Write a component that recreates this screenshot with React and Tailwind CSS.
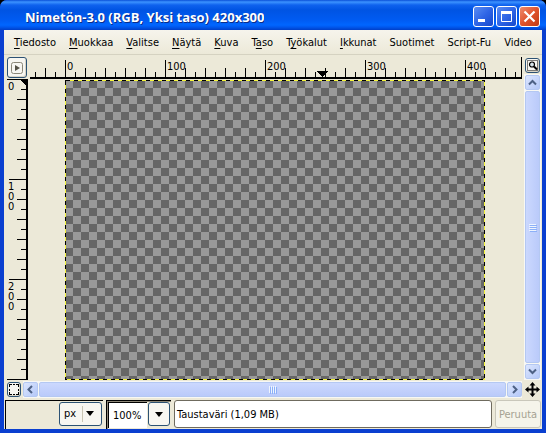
import React from "react";

const menus = [
  ["", "T", "iedosto"],
  ["", "M", "uokkaa"],
  ["", "V", "alitse"],
  ["", "N", "äytä"],
  ["", "K", "uva"],
  ["T", "a", "so"],
  ["T", "y", "ökalut"],
  ["", "I", "kkunat"],
  ["Suotimet", "", ""],
  ["Script-Fu", "", ""],
  ["Video", "", ""],
];

function TitleButton({ label, close, children }) {
  return (
    <button
      type="button"
      aria-label={label}
      className={
        "flex size-[21px] items-center justify-center rounded-[3px] border border-white bg-gradient-to-br " +
        (close ? "from-[#ee8a6c] via-[#e0532c] to-[#c13a12]" : "from-[#5a8cf2] via-[#2f65e6] to-[#1647cc]")
      }
    >
      <svg width="19" height="19" viewBox="0 0 19 19" fill="none">{children}</svg>
    </button>
  );
}

function TitleBar() {
  return (
    <header className="flex h-[30px] items-center justify-between bg-[linear-gradient(180deg,#0a50d8_0px,#3c93ff_2px,#0f62ee_5px,#0054e3_10px,#005bf2_20px,#0066ff_25px,#0058ee_27px,#003fc8_30px)] pt-[3px] pr-[6px] pl-[25px]">
      <h1 className="truncate font-['Open_Sans',sans-serif] text-[13px] leading-4 font-bold text-white [text-shadow:1px_1px_0_#0b2e8a]">
        Nimetön-3.0 (RGB, Yksi taso) 420x300
      </h1>
      <div className="flex shrink-0 gap-[2px]">
        <TitleButton label="Pienennä">
          <path d="M4 13.500h7" stroke="#fff" strokeWidth="3" />
        </TitleButton>
        <TitleButton label="Suurenna">
          <path d="M4.500 5v9.500h10V5" stroke="#fff" />
          <path d="M4 5.500h11" stroke="#fff" strokeWidth="3" />
        </TitleButton>
        <TitleButton label="Sulje" close>
          <path d="M4.500 4.500l10 10M14.500 4.500l-10 10" stroke="#fff" strokeWidth="2.200" />
        </TitleButton>
      </div>
    </header>
  );
}

function MenuBar() {
  return (
    <nav className="flex h-[25px] items-center justify-between border-b border-[#d5d2c1] bg-gradient-to-b from-[#f6f4ec] to-[#ece9d8] px-[10px] pt-[2px]">
      {menus.map(([before, key, after]) => (
        <button type="button" key={before + key + after} className="leading-4 whitespace-nowrap">
          {before}
          <span className="underline underline-offset-2">{key}</span>
          {after}
        </button>
      ))}
    </nav>
  );
}

const ticks = (from, to) => Array.from({ length: to - from + 1 }, (_, i) => from + i);
const tickLength = (k) => (k % 10 === 0 ? 17 : k % 2 === 0 ? 9 : 5);

function HorizontalRuler() {
  return (
    <div className="h-[22px] min-w-0 border-r border-b-2 border-black">
      <svg width="100%" height="20" className="block" shapeRendering="crispEdges">
        {ticks(-3, 200).map((k) => (
          <rect key={k} x={35 + k * 10} y={20 - tickLength(k)} width="1" height={tickLength(k)} />
        ))}
        {ticks(0, 4).map((n) => (
          <text key={n} x={37 + n * 100} y="13" fontSize="11">{n * 100}</text>
        ))}
        <path d="M287 14h11l-5 6h-1z" />
      </svg>
    </div>
  );
}

function VerticalRuler() {
  return (
    <div className="min-h-0 w-[21px] border-t border-r-2 border-b border-black">
      <svg width="19" height="299" className="block" shapeRendering="crispEdges">
        {ticks(1, 29).map((k) => (
          <rect key={k} x={19 - tickLength(k)} y={k * 10 - 1} width={tickLength(k)} height="1" />
        ))}
        <text x="1" y="10" fontSize="11">0</text>
        {[1, 2].map((n) => (
          <text key={n} fontSize="11">
            {String(n * 100).split("").map((digit, i) => (
              <tspan key={i} x="1" y={n * 100 + 10 + i * 10}>{digit}</tspan>
            ))}
          </text>
        ))}
        <path d="M13 0h6v6z" />
      </svg>
    </div>
  );
}

function Canvas() {
  return (
    <div className="min-w-0 overflow-hidden pt-px pl-[35px]">
      <div className="h-[300px] w-[420px] bg-[repeating-conic-gradient(#666_0_25%,#999_0_50%)] bg-[length:16px_16px]">
        <svg width="420" height="300" className="block" fill="none" shapeRendering="crispEdges">
          <rect x="0.500" y="0.500" width="419" height="299" stroke="#f4f43a" />
          <rect x="0.500" y="0.500" width="419" height="299" stroke="#000" strokeDasharray="4 4" />
        </svg>
      </div>
    </div>
  );
}

function Arrow({ label, d }) {
  return (
    <button
      type="button"
      aria-label={label}
      className="flex size-[15px] shrink-0 items-center justify-center rounded-[2px] border border-[#b4c8f2] bg-gradient-to-br from-[#dce6fe] to-[#b4c8f8]"
    >
      <svg width="9" height="9" viewBox="0 0 9 9" fill="none">
        <path d={d} stroke="#4d6185" strokeWidth="2" />
      </svg>
    </button>
  );
}

function VerticalScroll() {
  return (
    <div className="flex w-[17px] flex-col items-center gap-px bg-[#f8f8f4] py-px">
      <Arrow label="Vieritä ylös" d="M1 6.500l3.500-3.500l3.500 3.500" />
      <div className="flex w-[15px] flex-1 flex-col items-center justify-center gap-px rounded-[2px] border border-[#b4c8f2] bg-gradient-to-r from-[#cbd8fe] to-[#bacafa]">
        {[0, 1, 2, 3].map((i) => (
          <span key={i} className="h-px w-[7px] bg-[#eef4fe] shadow-[1px_1px_0_#8cb0f8]" />
        ))}
      </div>
      <Arrow label="Vieritä alas" d="M1 2.500l3.500 3.500l3.500-3.500" />
    </div>
  );
}

function HorizontalScroll() {
  return (
    <div className="flex h-[17px] items-center gap-px bg-[#f8f8f4]">
      <Arrow label="Vieritä vasemmalle" d="M6 1l-3.500 3.500l3.500 3.500" />
      <div className="flex h-[15px] flex-1 items-center justify-center gap-px rounded-[2px] border border-[#b4c8f2] bg-gradient-to-b from-[#cbd8fe] to-[#bacafa]">
        {[0, 1, 2, 3].map((i) => (
          <span key={i} className="h-[7px] w-px bg-[#eef4fe] shadow-[1px_1px_0_#8cb0f8]" />
        ))}
      </div>
      <Arrow label="Vieritä oikealle" d="M3 1l3.500 3.500l-3.500 3.500" />
    </div>
  );
}

const cornerButton =
  "flex items-center justify-center rounded-[3px] border border-[#2c5274] bg-[#f7f6f1] shadow-[inset_-1px_-1px_0_#d8d4c6]";

function Workspace() {
  return (
    <main className="grid grid-cols-[21px_minmax(0,1fr)_17px] gap-x-[2px] pt-[2px] pr-px pl-[3px]">
      <button type="button" aria-label="Kuvavalikko" className={cornerButton + " h-[21px] w-5"}>
        <svg width="12" height="12" viewBox="0 0 12 12" fill="none">
          <rect x="0.500" y="0.500" width="11" height="11" rx="2" stroke="#8b8778" />
          <path d="M4 3l5 3l-5 3z" fill="#555246" />
        </svg>
      </button>
      <HorizontalRuler />
      <button type="button" aria-label="Suurenna ikkunan mukana" className={cornerButton + " mt-px h-[15px] w-[15px] justify-self-center"}>
        <svg width="11" height="11" viewBox="0 0 11 11" fill="none">
          <rect x="0.500" y="0.500" width="10" height="10" stroke="#000" strokeDasharray="1 1" />
          <circle cx="5" cy="4.500" r="2.500" fill="#d7e4ea" stroke="#000" strokeWidth="1.200" />
          <path d="M7 6.500l3 3" stroke="#000" strokeWidth="2" />
        </svg>
      </button>

      <VerticalRuler />
      <Canvas />
      <div className="-mt-[5px] flex">
        <VerticalScroll />
      </div>

      <button type="button" aria-label="Pikamaski" className={cornerButton + " mt-[2px] h-[15px] w-[14px]"}>
        <svg width="10" height="11" viewBox="0 0 10 11" fill="none" stroke="#000" shapeRendering="crispEdges">
          <path d="M0.500 3V0.500H3M7 0.500h2.500V3M9.500 8v2.500H7M3 10.500H0.500V8M4 0.500h2M4 10.500h2M0.500 4.500v2M9.500 4.500v2" />
        </svg>
      </button>
      <div className="-ml-[7px] pt-px">
        <HorizontalScroll />
      </div>
      <button type="button" aria-label="Siirry kuvassa" className="mt-px flex h-[17px] items-center justify-center">
        <svg width="15" height="15" viewBox="0 0 15 15">
          <path d="M7.500 0l3 3.500h-2v3h3v-2l3.500 3l-3.500 3v-2h-3v3h2l-3 3.500l-3-3.500h2v-3h-3v2l-3.500-3l3.500-3v2h3v-3h-2z" />
        </svg>
      </button>
    </main>
  );
}

function StatusBar() {
  return (
    <footer className="mt-[2px] flex h-[29px] gap-[3px] pr-px pl-px">
      <div className="flex w-[98px] justify-end border-t border-l border-black pt-px pr-px">
        <div className="relative flex h-6 w-[43px] items-center rounded-[3px] border border-[#2c5274] bg-[#f7f6f1]">
          <select aria-label="Yksikkö" className="h-full w-full appearance-none bg-transparent pl-1 outline-none">
            <option>px</option>
          </select>
          <svg width="17" height="16" className="pointer-events-none absolute right-[2px]">
            <path d="M0.500 0v16" stroke="#c9c5b4" />
            <path d="M4 5h8l-4 5z" />
          </svg>
        </div>
      </div>
      <div className="flex w-[65px] gap-px border-t border-l border-black shadow-[inset_1px_1px_0_#8d8778]">
        <div className="flex pt-px pl-px">
          <input aria-label="Suurennus" defaultValue="100%" className="h-[26px] w-[39px] border-t border-l border-black bg-white pl-1 outline-none" />
        </div>
        <button type="button" aria-label="Valitse suurennus" className="mt-px flex h-6 w-[22px] items-center justify-center rounded-[3px] border border-[#2c5274] bg-[#f7f6f1]">
          <svg width="8" height="5"><path d="M0 0h8l-4 5z" /></svg>
        </button>
      </div>
      <output className="flex h-7 min-w-0 flex-1 items-center rounded-[3px] border border-[#6f6b5e] bg-white pt-[2px] pl-[2px] whitespace-nowrap">
        Taustaväri (1,09 MB)
      </output>
      <button type="button" disabled className="h-7 w-[46px] shrink-0 rounded-[3px] border border-[#c9c7ba] bg-[#f5f4ea] pt-[2px] text-[#a5a292]">
        Peruuta
      </button>
    </footer>
  );
}

export default function App() {
  return (
    <div className="bg-black">
      <div className="overflow-hidden rounded-t-[7px] bg-[#0a3fd0] pb-1 font-['DejaVu_Sans_Condensed','DejaVu_Sans',sans-serif] text-[11px] text-black">
        <TitleBar />
        <div className="mx-1 bg-[#ece9d8]">
          <MenuBar />
          <Workspace />
          <StatusBar />
        </div>
      </div>
    </div>
  );
}
